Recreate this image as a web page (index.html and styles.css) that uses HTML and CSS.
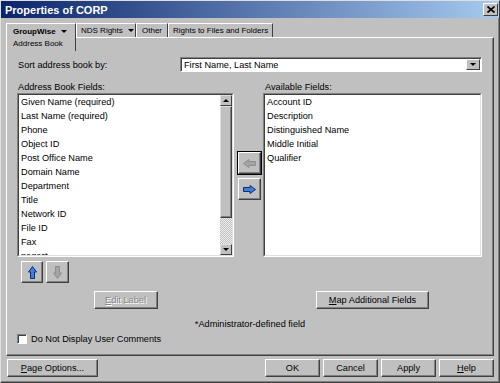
FILE: index.html
```html
<!DOCTYPE html>
<html lang="en">
<head>
    <meta charset="UTF-8">
    <title>Properties of CORP</title>
    <link rel="stylesheet" href="styles.css">
</head>
<body>
<div class="window">
    <div class="titlebar">
        <span class="title">Properties of CORP</span>
        <span class="close-btn">
            <svg width="8" height="7" viewBox="0 0 8 7"><path d="M0.5 0.5 L7.5 6.5 M7.5 0.5 L0.5 6.5" stroke="#000" stroke-width="1.7" fill="none"/></svg>
        </span>
    </div>

    <div class="tabs">
        <div class="tab active"><b>GroupWise <span class="tri"></span></b><br>Address Book</div>
        <div class="tab tab-nds">NDS Rights <span class="tri"></span></div>
        <div class="tab tab-other">Other</div>
        <div class="tab tab-rights">Rights to Files and Folders</div>
    </div>

    <div class="panel">
        <div class="sort-row">
            <span class="sort-label">Sort address book by:</span>
            <div class="combo">
                <span class="combo-text">First Name, Last Name</span>
                <span class="combo-btn"><span class="tri"></span></span>
            </div>
        </div>

        <div class="fields">
            <div class="caption cap-left">Address Book Fields:</div>
            <div class="caption cap-right">Available Fields:</div>

            <div class="listbox list-left">
                <div class="listbox-inner">
                    <ul class="items">
                        <li>Given Name (required)</li>
                        <li>Last Name (required)</li>
                        <li>Phone</li>
                        <li>Object ID</li>
                        <li>Post Office Name</li>
                        <li>Domain Name</li>
                        <li>Department</li>
                        <li>Title</li>
                        <li>Network ID</li>
                        <li>File ID</li>
                        <li>Fax</li>
                        <li>pager*</li>
                    </ul>
                    <div class="scrollbar">
                        <div class="sb-btn"><span class="tri-up"></span></div>
                        <div class="sb-thumb"></div>
                        <div class="sb-track"></div>
                        <div class="sb-btn"><span class="tri"></span></div>
                    </div>
                </div>
            </div>

            <div class="move-btns">
                <button class="icon-btn default-btn">
                    <svg width="13" height="9" viewBox="0 0 13 9"><path d="M12.5 2.5 H6 V0.5 L0.5 4.5 L6 8.5 V6.5 H12.5 Z" fill="#a4a4a4" stroke="#8e8e8e"/></svg>
                </button>
                <button class="icon-btn">
                    <svg width="13" height="9" viewBox="0 0 13 9"><path d="M0.5 2.5 H7 V0.5 L12.5 4.5 L7 8.5 V6.5 H0.5 Z" fill="#3d80d6" stroke="#102f78"/></svg>
                </button>
            </div>

            <div class="listbox list-right">
                <div class="listbox-inner">
                    <ul class="items">
                        <li>Account ID</li>
                        <li>Description</li>
                        <li>Distinguished Name</li>
                        <li>Middle Initial</li>
                        <li>Qualifier</li>
                    </ul>
                </div>
            </div>

            <div class="order-btns">
                <button class="icon-btn">
                    <svg width="9" height="13" viewBox="0 0 9 13"><path d="M4.5 0.5 L8.5 6 H6.5 V12.5 H2.5 V6 H0.5 Z" fill="#3d80d6" stroke="#102f78"/></svg>
                </button>
                <button class="icon-btn">
                    <svg width="9" height="13" viewBox="0 0 9 13"><path d="M4.5 12.5 L8.5 7 H6.5 V0.5 H2.5 V7 H0.5 Z" fill="#a4a4a4" stroke="#8e8e8e"/></svg>
                </button>
            </div>

            <div class="btn-cell cell-left">
                <button class="btn btn-edit" disabled><u>E</u>dit Label</button>
            </div>
            <div class="btn-cell cell-right">
                <button class="btn btn-map"><u>M</u>ap Additional Fields</button>
            </div>
        </div>

        <div class="note">*Administrator-defined field</div>

        <div class="check-row">
            <span class="checkbox"></span>
            <span>Do Not Display User Comments</span>
        </div>
    </div>

    <div class="footer">
        <button class="btn btn-page"><u>P</u>age Options...</button>
        <div class="footer-right">
            <button class="btn btn-foot">OK</button>
            <button class="btn btn-foot">Cancel</button>
            <button class="btn btn-foot">Apply</button>
            <button class="btn btn-foot"><u>H</u>elp</button>
        </div>
    </div>
</div>
</body>
</html>
```

FILE: styles.css
```css
* {
    margin: 0;
    padding: 0;
    box-sizing: border-box;
}

body {
    font-family: 'Liberation Sans', Arial, sans-serif;
    font-size: 9.2px;
    color: #000;
    background: #c0c0c0;
    width: 500px;
    height: 383px;
    overflow: hidden;
}

.window {
    width: 500px;
    height: 383px;
    border: 1px solid;
    border-color: #dfdfdf #404040 #404040 #dfdfdf;
    box-shadow: inset -1px -1px #808080;
    background: #c0c0c0;
}

.titlebar {
    height: 17px;
    display: flex;
    align-items: center;
    justify-content: space-between;
    padding: 0 1px 0 4px;
    background: linear-gradient(to right, #0a246a, #a6caf0);
}

.title {
    color: #fff;
    font-weight: bold;
    font-size: 11px;
}

.close-btn {
    width: 15px;
    height: 13px;
    display: flex;
    align-items: center;
    justify-content: center;
    background: #c0c0c0;
    border: 1px solid;
    border-color: #fff #404040 #404040 #fff;
}

/* tabs */
.tabs {
    display: flex;
    height: 14px;
    margin: 5px 0 0 5px;
    position: relative;
    z-index: 1;
    font-size: 8px;
}

.tab {
    height: 14px;
    padding: 1px 0 0 4px;
    line-height: 11px;
    white-space: nowrap;
    background: #c0c0c0;
    border-top: 1px solid #fff;
    border-left: 1px solid #fff;
    border-right: 1px solid #404040;
}

.tab.active {
    width: 70px;
    height: 28px;
    padding: 2px 0 0 6px;
    line-height: 12px;
}

.tab-nds { width: 60px; }
.tab-other { width: 32px; padding-left: 5px; }
.tab-rights { width: 105px; }

.tri {
    display: inline-block;
    width: 0;
    height: 0;
    border-left: 3px solid transparent;
    border-right: 3px solid transparent;
    border-top: 3px solid #000;
    vertical-align: middle;
    margin-left: 3px;
}

.tri-up {
    display: inline-block;
    width: 0;
    height: 0;
    border-left: 3px solid transparent;
    border-right: 3px solid transparent;
    border-bottom: 3px solid #000;
}

/* panel */
.panel {
    margin-left: 5px;
    width: 488px;
    height: 319px;
    padding: 0 10px;
    border: 1px solid;
    border-color: #fff #404040 #404040 #fff;
    box-shadow: inset -1px -1px #808080;
}

.sort-row {
    display: flex;
    align-items: center;
    height: 15px;
    margin-top: 19px;
}

.sort-label {
    width: 163px;
    padding-left: 1px;
}

.combo {
    width: 302px;
    height: 15px;
    display: flex;
    align-items: center;
    background: #fff;
    border: 1px solid;
    border-color: #808080 #fff #fff #808080;
    box-shadow: inset 1px 1px #404040;
}

.combo-text {
    flex: 1;
    padding-left: 3px;
}

.combo-btn {
    width: 14px;
    height: 11px;
    margin-right: 1px;
    display: flex;
    align-items: center;
    justify-content: center;
    background: #c0c0c0;
    border: 1px solid;
    border-color: #fff #404040 #404040 #fff;
}

.combo-btn .tri,
.sb-btn .tri {
    margin-left: 0;
}

.fields {
    display: grid;
    grid-template-columns: 217px 29px 219px;
    grid-template-rows: 12px 164px 34px 18px;
    margin-top: 9px;
}

.caption {
    line-height: 12px;
}

.cap-left { grid-column: 1; grid-row: 1; padding-left: 1px; }
.cap-right { grid-column: 3; grid-row: 1; padding-left: 2px; }

.listbox {
    border: 1px solid;
    border-color: #808080 #fff #fff #808080;
}

.list-left { grid-column: 1; grid-row: 2; }
.list-right { grid-column: 3; grid-row: 2; }

.listbox-inner {
    height: 100%;
    display: flex;
    background: #fff;
    border: 1px solid;
    border-color: #404040 #dfdfdf #dfdfdf #404040;
}

.items {
    flex: 1;
    list-style: none;
    padding-left: 2px;
    overflow: hidden;
}

.items li {
    height: 14px;
    line-height: 14px;
    white-space: nowrap;
}

.scrollbar {
    width: 12px;
    display: flex;
    flex-direction: column;
}

.sb-btn {
    height: 11px;
    display: flex;
    align-items: center;
    justify-content: center;
    background: #c0c0c0;
    border: 1px solid;
    border-color: #dfdfdf #404040 #404040 #dfdfdf;
}

.sb-thumb {
    height: 112px;
    background: #c0c0c0;
    border: 1px solid;
    border-color: #dfdfdf #404040 #404040 #dfdfdf;
    box-shadow: inset -1px -1px #808080;
}

.sb-track {
    flex: 1;
    background: repeating-conic-gradient(#c0c0c0 0 25%, #eeeeee 0 50%) 0 0 / 2px 2px;
}

.move-btns {
    grid-column: 2;
    grid-row: 2;
    display: flex;
    flex-direction: column;
    gap: 4px;
    padding: 59px 0 0 4px;
}

.order-btns {
    grid-column: 1;
    grid-row: 3;
    display: flex;
    gap: 3px;
    padding: 4px 0 0 4px;
    align-items: flex-start;
}

.icon-btn {
    width: 23px;
    height: 22px;
    display: flex;
    align-items: center;
    justify-content: center;
    background: #c0c0c0;
    border: 1px solid;
    border-color: #fff #404040 #404040 #fff;
    box-shadow: inset -1px -1px #808080;
}

.default-btn {
    outline: 1px solid #000;
}

.order-btns .icon-btn:first-child {
    width: 22px;
}

.btn-cell {
    grid-row: 4;
    display: flex;
    justify-content: center;
}

.cell-left { grid-column: 1; }
.cell-right { grid-column: 3; }

.btn {
    height: 18px;
    font-family: inherit;
    font-size: 9.2px;
    color: #000;
    background: #c0c0c0;
    border: 1px solid;
    border-color: #fff #404040 #404040 #fff;
    box-shadow: inset -1px -1px #808080;
}

.btn:disabled {
    color: #8a8a8a;
    text-shadow: 1px 1px #fff;
}

.btn-edit { width: 64px; }
.btn-map { width: 113px; }

.note {
    margin-top: 9px;
    line-height: 12px;
    text-align: center;
}

.check-row {
    display: flex;
    align-items: center;
    gap: 4px;
    height: 12px;
    margin-top: 3px;
}

.checkbox {
    width: 10px;
    height: 10px;
    background: #fff;
    border: 1px solid;
    border-color: #808080 #fff #fff #808080;
    box-shadow: inset 1px 1px #404040;
}

/* bottom buttons */
.footer {
    display: flex;
    justify-content: space-between;
    height: 18px;
    margin: 3px 5px 0 6px;
}

.btn-page { width: 91px; }

.footer-right {
    display: flex;
    gap: 3px;
}

.btn-foot { width: 55px; }
```
